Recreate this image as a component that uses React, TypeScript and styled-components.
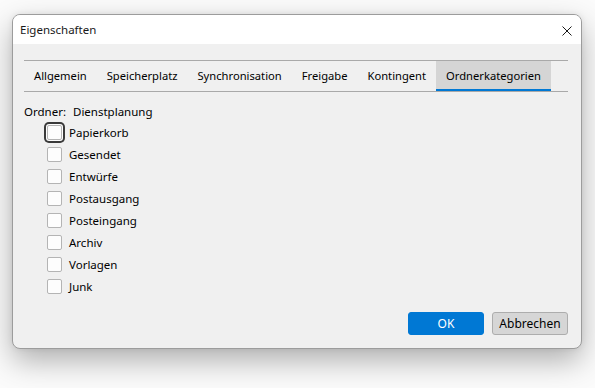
import React, { FC } from 'react';
import styled, { createGlobalStyle } from 'styled-components';

const GlobalStyle = createGlobalStyle`
    html, body {
        margin: 0;
        padding: 0;
        background: #fbfbfb;
        font-family: "Segoe UI", "Noto Sans", sans-serif;
        font-size: 11.5px;
        color: #000;
    }
`;

const StyledPage = styled.div`
    width: 595px;
    height: 388px;
    padding: 14px 0 0 12px;
    box-sizing: border-box;
`;
const StyledWindow = styled.div`
    width: 570px;
    height: 335px;
    box-sizing: border-box;
    border: 1px solid #9c9c9c;
    border-radius: 8px;
    overflow: hidden;
    background: #f0f0f0;
    display: flex;
    flex-direction: column;
    box-shadow: 0 12px 30px rgba(0, 0, 0, 0.3), 0 0 6px rgba(0, 0, 0, 0.08);
`;
const StyledTitleBar = styled.div`
    height: 29px;
    flex: none;
    background: #fff;
    display: flex;
    align-items: center;
    justify-content: space-between;
    padding: 0 9px 0 7px;
`;
const StyledTitle = styled.span`
    color: #1a1a1a;
`;
const StyledClose = styled.svg`
    width: 10px;
    height: 10px;
    margin-top: 2px;
`;
const StyledBody = styled.div`
    flex: 1;
    display: flex;
    flex-direction: column;
    padding: 16px 13px 13px 11px;
`;
const StyledTabStrip = styled.div`
    display: flex;
    border-top: 1px solid #a9a9a9;
    border-bottom: 1px solid #a9a9a9;
`;
const StyledTab = styled.div<{ $active?: boolean }>`
    height: 30px;
    box-sizing: border-box;
    padding: 1px 10px 0;
    display: flex;
    align-items: center;
    font-size: 11.2px;
    background: ${p => (p.$active ? '#d5d5d5' : 'transparent')};
    border-bottom: 2px solid ${p => (p.$active ? '#0078d4' : 'transparent')};
`;
const StyledFolderRow = styled.div`
    display: flex;
    height: 18px;
    align-items: center;
    margin-top: 10px;
`;
const StyledFolderLabel = styled.span`
    width: 49px;
`;
const StyledList = styled.div`
    display: flex;
    flex-direction: column;
    margin-top: 1px;
    padding-left: 23px;
`;
const StyledCheckRow = styled.label`
    display: flex;
    align-items: center;
    height: 22px;
    gap: 7px;
`;
const StyledBox = styled.span<{ $focused?: boolean }>`
    width: 15px;
    height: 15px;
    box-sizing: border-box;
    border: 1px solid #b4b4b4;
    border-radius: 2px;
    background: #fdfdfd;
    box-shadow: ${p => (p.$focused ? '0 0 0 1px #fdfdfd, 0 0 0 3px #3a3a3a' : 'none')};
`;
const StyledFooter = styled.div`
    margin-top: auto;
    display: flex;
    justify-content: flex-end;
    gap: 8px;
`;
const StyledButton = styled.button<{ $primary?: boolean }>`
    width: 76px;
    height: 23px;
    box-sizing: border-box;
    font: inherit;
    font-size: 12px;
    border-radius: 3px;
    border: 1px solid ${p => (p.$primary ? '#0078d4' : '#adadad')};
    background: ${p => (p.$primary ? '#0078d4' : '#d6d6d6')};
    color: ${p => (p.$primary ? '#fff' : '#000')};
    padding: 0;
`;

const tabs = ['Allgemein', 'Speicherplatz', 'Synchronisation', 'Freigabe', 'Kontingent', 'Ordnerkategorien'];
const categories = ['Papierkorb', 'Gesendet', 'Entwürfe', 'Postausgang', 'Posteingang', 'Archiv', 'Vorlagen', 'Junk'];

const App: FC = () => {
    return (
        <StyledPage>
            <GlobalStyle />
            <StyledWindow>
                <StyledTitleBar>
                    <StyledTitle>Eigenschaften</StyledTitle>
                    <StyledClose viewBox="0 0 10 10">
                        <path d="M0.5 0.5 L9.5 9.5 M9.5 0.5 L0.5 9.5" stroke="#1a1a1a" strokeWidth="1" />
                    </StyledClose>
                </StyledTitleBar>
                <StyledBody>
                    <StyledTabStrip>
                        {tabs.map(t => (
                            <StyledTab key={t} $active={t === 'Ordnerkategorien'}>
                                {t}
                            </StyledTab>
                        ))}
                    </StyledTabStrip>
                    <StyledFolderRow>
                        <StyledFolderLabel>Ordner:</StyledFolderLabel>
                        <span>Dienstplanung</span>
                    </StyledFolderRow>
                    <StyledList>
                        {categories.map((c, i) => (
                            <StyledCheckRow key={c}>
                                <StyledBox $focused={i === 0} />
                                {c}
                            </StyledCheckRow>
                        ))}
                    </StyledList>
                    <StyledFooter>
                        <StyledButton $primary>OK</StyledButton>
                        <StyledButton>Abbrechen</StyledButton>
                    </StyledFooter>
                </StyledBody>
            </StyledWindow>
        </StyledPage>
    );
};

export default App;
